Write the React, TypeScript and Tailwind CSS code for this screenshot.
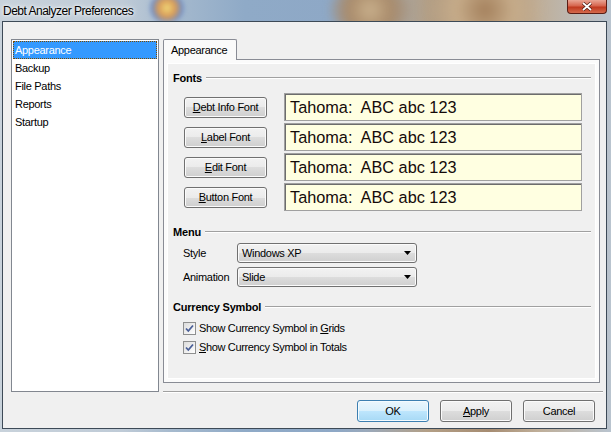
import React from 'react';

const btnBase =
  'flex items-center rounded-[3px] border border-[#707070] bg-[linear-gradient(180deg,#f2f2f2_0%,#ebebeb_50%,#dddddd_50%,#cfcfcf_100%)] shadow-[inset_0_0_0_1px_#fbfbfb] text-[11px] tracking-[-0.3px]';
const btn = `${btnBase} justify-center`;

function U({ children }: { children: React.ReactNode }) {
  return <span className="underline underline-offset-[1px]">{children}</span>;
}

function GroupHeading({ title }: { title: string }) {
  return (
    <div className="flex items-center h-[14px] pl-[5px] pr-[4px]">
      <span className="font-bold text-[11px] tracking-[-0.2px]">{title}</span>
      <div className="flex-1 ml-[4px] h-[2px] border-t border-[#a0a0a0] border-b border-b-white" />
    </div>
  );
}

function Combo({ value }: { value: string }) {
  return (
    <div className={`${btnBase} w-[180px] h-[20px] justify-between pl-[4px] pr-[5px]`}>
      <span>{value}</span>
      <svg width="7" height="4" viewBox="0 0 7 4">
        <path d="M0 0h7L3.5 4z" fill="#000" />
      </svg>
    </div>
  );
}

function Check({ children }: { children: React.ReactNode }) {
  return (
    <div className="flex items-center h-[16px]">
      <div className="w-[13px] h-[13px] border border-[#8e8f8f] bg-[linear-gradient(135deg,#dcdcdc,#ffffff)] p-[1px]">
        <svg width="9" height="9" viewBox="0 0 9 9" className="block">
          <path d="M1 4.5l2.3 2.5L8 1.5" stroke="#4a5f97" strokeWidth="1.8" fill="none" />
        </svg>
      </div>
      <span className="ml-[3px] tracking-[-0.35px]">{children}</span>
    </div>
  );
}

const fontButtons: { key: string; rest: string }[] = [
  { key: 'D', rest: 'ebt Info Font' },
  { key: 'L', rest: 'abel Font' },
  { key: 'E', rest: 'dit Font' },
  { key: 'B', rest: 'utton Font' },
];

export default function App() {
  return (
    <div className="relative w-[611px] h-[432px] overflow-hidden font-['Liberation_Sans',Arial,sans-serif] text-[11px] text-black">
      {/* aero glass backdrop */}
      <div className="absolute inset-0 bg-[linear-gradient(90deg,#c8d2db_0%,#bfcbd7_20%,#a6bace_28%,#8faac7_40%,#8ea8c6_55%,#9aa9bb_60%,#b39f86_70%,#a68c72_80%,#bfae98_88%,#b9c4cf_100%)]" />
      <div className="absolute left-[150px] top-[-6px] w-[34px] h-[28px] rounded-full bg-[radial-gradient(circle,#f0d878_0%,#d89a58_40%,#6f8fc8_70%,transparent_100%)] blur-[2px]" />
      <div className="absolute left-[330px] top-[-10px] w-[80px] h-[40px] rounded-full bg-[radial-gradient(circle,#c9b08c_0%,#a88a6a_50%,transparent_100%)] blur-[4px]" />
      <div className="absolute left-[430px] top-[-10px] w-[110px] h-[40px] rounded-full bg-[radial-gradient(circle,#a4805c_0%,#c6ac8a_50%,transparent_100%)] blur-[4px]" />

      <div className="relative flex flex-col">
        {/* title bar */}
        <div className="relative h-[21px] flex items-center pl-[3px]">
          <span className="text-[12px] tracking-[-0.5px] text-black [text-shadow:0_0_6px_#ffffff,0_0_3px_#ffffff]">
            Debt Analyzer Preferences
          </span>
          <div className="absolute left-[567px] top-0 w-[40px] h-[14px] rounded-b-[4px] border border-t-0 border-[#5a1d14] bg-[linear-gradient(180deg,#e9a594_0%,#d6654e_45%,#c0391f_55%,#d46a4c_100%)] flex items-center justify-center">
            <svg width="12" height="9" viewBox="0 0 12 9">
              <path d="M2 1l8 7M10 1L2 8" stroke="#4a1a10" strokeWidth="3.2" />
              <path d="M2 1l8 7M10 1L2 8" stroke="#ffffff" strokeWidth="1.8" />
            </svg>
          </div>
        </div>

        {/* client area */}
        <div className="ml-[2px] w-[605px] h-[408px] border border-[#3d4a57] bg-[#f0f0f0] pl-[8px] pt-[17px] flex gap-[4px]">
          {/* category list */}
          <div className="w-[148px] h-[353px] border border-[#828790] bg-white p-[1px] flex flex-col">
            <div className="h-[18px] flex items-center pl-[1px] bg-[#3399ff] text-white border border-dotted border-[#7a4a00] tracking-[-0.3px]">
              Appearance
            </div>
            {['Backup', 'File Paths', 'Reports', 'Startup'].map((item) => (
              <div key={item} className="h-[18px] flex items-center pl-[2px] tracking-[-0.3px]">
                {item}
              </div>
            ))}
          </div>

          {/* right column */}
          <div className="w-[440px] flex flex-col">
            <div className="relative z-10 w-[74px] h-[21px] border border-b-0 border-[#898c95] rounded-t-[2px] bg-[#fafafa] pl-[7px] flex items-center tracking-[-0.3px]">
              Appearance
            </div>
            <div className="mt-[-1px] w-[437px] h-[324px] border border-[#898c95] bg-[#fbfbfb] p-[3px]">
              <div className="w-full h-full border border-white bg-[#f0f0f0] pt-[7px]">
                <GroupHeading title="Fonts" />
                <div className="mt-[8px] pl-[16px] flex flex-col gap-[2px]">
                  {fontButtons.map((b) => (
                    <div key={b.key} className="flex items-center h-[28px]">
                      <div className={`${btn} w-[83px] h-[21px]`}>
                        <span>
                          <U>{b.key}</U>
                          {b.rest}
                        </span>
                      </div>
                      <div className="ml-[17px] w-[298px] h-[28px] border border-[#a0a0a0] shadow-[inset_1px_1px_0_#6d6d6d] bg-[#ffffe1] flex items-center pl-[5px] text-[16.3px] whitespace-pre text-[#140a0a]">
                        Tahoma:  ABC abc 123
                      </div>
                    </div>
                  ))}
                </div>

                <div className="mt-[14px]">
                  <GroupHeading title="Menu" />
                </div>
                <div className="mt-[4px] pl-[15px] flex flex-col gap-[4px]">
                  <div className="flex items-center">
                    <span className="w-[54px] tracking-[-0.3px]">Style</span>
                    <Combo value="Windows XP" />
                  </div>
                  <div className="flex items-center">
                    <span className="w-[54px] tracking-[-0.3px]">Animation</span>
                    <Combo value="Slide" />
                  </div>
                </div>

                <div className="mt-[13px]">
                  <GroupHeading title="Currency Symbol" />
                </div>
                <div className="mt-[6px] pl-[15px] flex flex-col gap-[3px]">
                  <Check>
                    Show Currency Symbol in <U>G</U>rids
                  </Check>
                  <Check>
                    <U>S</U>how Currency Symbol in Totals
                  </Check>
                </div>
              </div>
            </div>

            <div className="mt-[8px] h-[2px] border-t border-[#a0a0a0] border-b border-b-white" />

            <div className="mt-[7px] pr-[8px] flex justify-end gap-[11px]">
              <div className="flex items-center justify-center w-[72px] h-[22px] rounded-[3px] border border-[#3c7fb1] bg-[linear-gradient(180deg,#eaf6fd_0%,#d9f0fc_50%,#bee6fd_50%,#a7d9f5_100%)] shadow-[inset_0_0_0_1px_#f4fbff] tracking-[-0.3px]">
                OK
              </div>
              <div className={`${btn} w-[72px] h-[22px]`}>
                <span>
                  <U>A</U>pply
                </span>
              </div>
              <div className={`${btn} w-[72px] h-[22px]`}>Cancel</div>
            </div>
          </div>
        </div>
      </div>
    </div>
  );
}
